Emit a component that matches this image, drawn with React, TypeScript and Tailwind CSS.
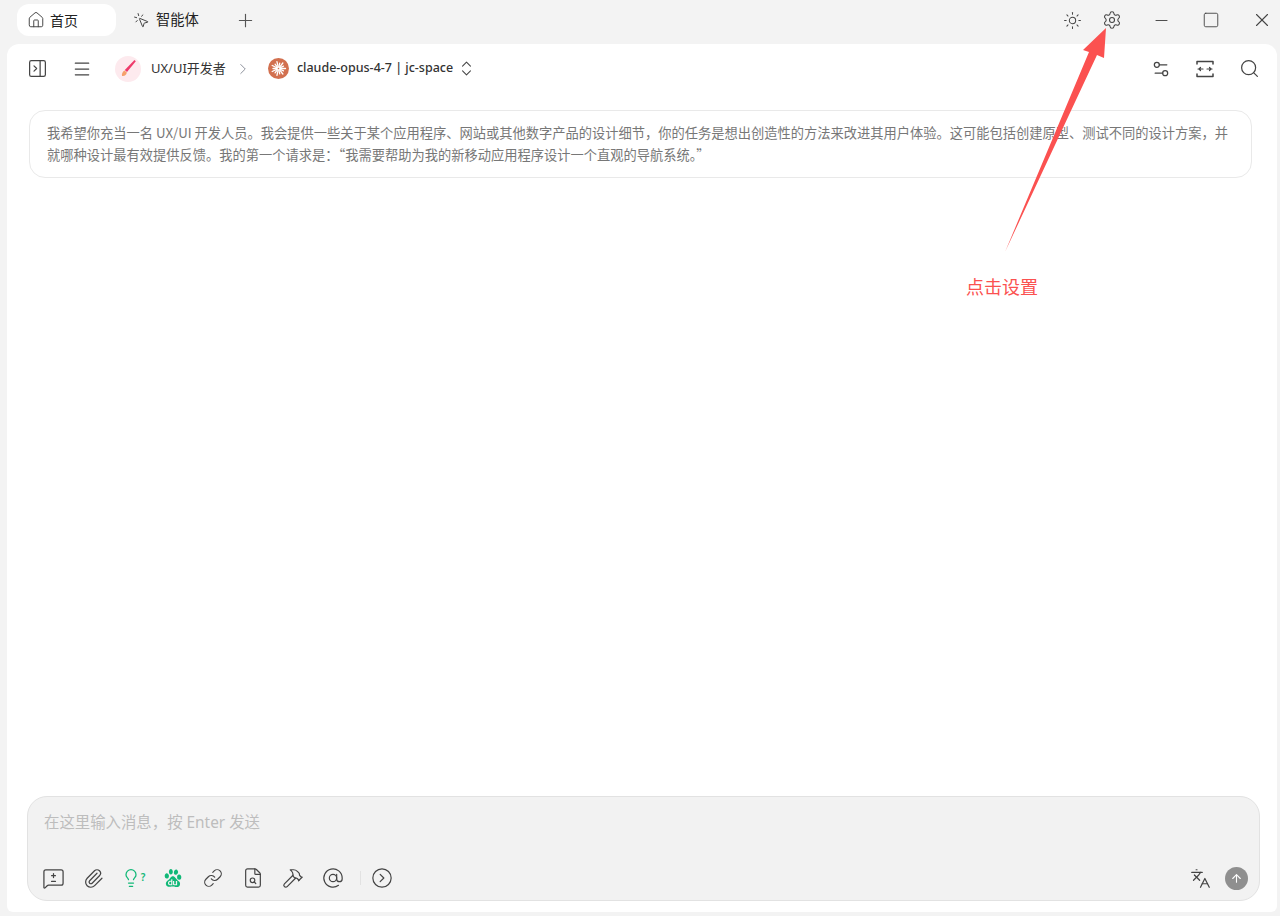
import React from "react";
import {
  House, MousePointerClick, Plus, Sun, Settings, Minus, Square, X, PanelRightClose, Menu,
  ChevronRight, ChevronsUpDown, Settings2, Search, MessageSquareDiff, Paperclip, Lightbulb,
  Link, FileSearch, Hammer, AtSign, CircleChevronRight, Languages, ArrowUp,
} from "lucide-react";
import { SiBaidu } from "react-icons/si";

const font = "font-['Noto_Sans','Noto_Sans_CJK_SC',sans-serif]";

function Slot({ children, w = "w-10" }: { children: React.ReactNode; w?: string }) {
  return <div className={`${w} h-6 flex items-center justify-center text-[#444]`}>{children}</div>;
}

function FitIcon() {
  return (
    <svg width="20" height="20" viewBox="0 0 20 20" fill="none" stroke="#444" strokeWidth="1.5" strokeLinecap="round" strokeLinejoin="round">
      <path d="M2 5V2.500h16V5M2 15v2.500h16V15" />
      <path d="M3 10H8M5.500 8.500 4 10 5.500 11.500M12 10h5M14.500 8.500l1.500 1.500L14.500 11.500" strokeWidth="1.200" />
    </svg>
  );
}

function Sunburst() {
  const rays = Array.from({ length: 14 }, (_, i) => (i * Math.PI * 2) / 14);
  return (
    <svg width="21" height="21" viewBox="0 0 21 21" className="shrink-0">
      <circle cx="10.500" cy="10.500" r="10.500" fill="#d2704f" />
      {rays.map((a, i) => (
        <line
          key={i}
          x1={10.5 + Math.cos(a) * 1.5}
          y1={10.5 + Math.sin(a) * 1.5}
          x2={10.5 + Math.cos(a) * (i % 2 ? 5.5 : 7)}
          y2={10.5 + Math.sin(a) * (i % 2 ? 5.5 : 7)}
          stroke="#fff"
          strokeWidth="1.300"
          strokeLinecap="round"
        />
      ))}
    </svg>
  );
}

function BrushAvatar() {
  return (
    <div className="w-[26px] h-[26px] rounded-full bg-[#fdeaee] flex items-center justify-center shrink-0">
      <svg width="18" height="20" viewBox="0 0 18 20">
        <path d="M15.500 1 16.800 2.200 8 13 5.800 11Z" fill="#ee3a6a" />
        <path d="M5.500 11.500 7.800 13.500C7.500 16 5.500 17.500 3 17 2.500 15 3.500 12.500 5.500 11.500Z" fill="#f5a06a" />
      </svg>
    </div>
  );
}

export default function App() {
  return (
    <div className={`relative w-[1280px] h-[916px] overflow-hidden bg-[#f3f3f3] flex flex-col ${font}`}>
      {/* Title bar */}
      <div className="h-[44px] shrink-0 flex items-start pt-1 pl-[17px]">
        <div className="w-[99px] h-8 bg-white rounded-xl flex items-center pl-[9.500px] gap-[5.500px] text-[14px] text-[#222]">
          <House size={18} strokeWidth={1.300} className="text-[#444]" />
          <span>首页</span>
        </div>
        <div className="h-8 flex items-center ml-[16.500px] gap-[6.500px] text-[14.300px] text-[#222]">
          <MousePointerClick size={17} strokeWidth={1.400} className="text-[#444]" />
          <span>智能体</span>
        </div>
        <div className="h-8 flex items-center ml-[36px] text-[#555]">
          <Plus size={21} strokeWidth={1.300} />
        </div>
        <div className="ml-auto h-8 flex items-center">
          <Slot><Sun size={19} strokeWidth={1.300} /></Slot>
          <Slot><Settings size={20} strokeWidth={1.300} /></Slot>
          <div className="w-[4px]" />
          <Slot w="w-[50px]"><Minus size={19} strokeWidth={1.200} /></Slot>
          <Slot w="w-[50px]"><Square size={18} strokeWidth={1.200} /></Slot>
          <div className="w-2" />
          <Slot w="w-[36px]"><X size={22} strokeWidth={1.200} /></Slot>
        </div>
      </div>

      {/* Main panel */}
      <div className="flex-1 ml-[7px] mr-[3px] mb-[4px] bg-white rounded-t-xl rounded-b-md flex flex-col min-h-0">
        <div className="h-[49px] shrink-0 flex items-center pl-[20px] pr-[17px]">
          <PanelRightClose size={21} strokeWidth={1.400} className="text-[#444]" />
          <Menu size={20} strokeWidth={1.500} className="text-[#444] ml-[24px]" />
          <div className="ml-[23px]"><BrushAvatar /></div>
          <span className="ml-[10px] text-[13px] text-[#333]">UX/UI开发者</span>
          <ChevronRight size={18} strokeWidth={1.300} className="text-[#8a8f99] ml-2" />
          <div className="ml-[16px]"><Sunburst /></div>
          <span className="ml-2 text-[12.500px] font-medium text-[#333]">claude-opus-4-7 | jc-space</span>
          <ChevronsUpDown size={19} strokeWidth={1.300} className="text-[#444] ml-[4px]" />
          <div className="ml-auto flex items-center gap-[24px]">
            <Settings2 size={20} strokeWidth={1.500} className="text-[#444]" />
            <FitIcon />
            <Search size={21} strokeWidth={1.400} className="text-[#444]" />
          </div>
        </div>

        <div className="flex-1 min-h-0 pt-[17px] pl-[22px] pr-[25px]">
          <div className="h-[68px] rounded-2xl border border-[#e9e9e9] px-[17px] pt-[11px] font-['Noto_Sans_CJK_SC',sans-serif] text-[13.250px] leading-[22px] text-[#777]">
            我希望你充当一名 UX/UI 开发人员。我会提供一些关于某个应用程序、网站或其他数字产品的设计细节，你的任务是想出创造性的方法来改进其用户体验。这可能包括创建原型、测试不同的设计方案，并就哪种设计最有效提供反馈。我的第一个请求是：“我需要帮助为我的新移动应用程序设计一个直观的导航系统。”
          </div>
        </div>

        <div className="ml-[20px] mr-[17px] mb-[11px] h-[105px] shrink-0 rounded-[20px] border border-[#e2e2e2] bg-[#f2f2f2] flex flex-col pl-[16px] pr-[11px]">
          <div className="pt-[14px] text-[15.400px] leading-[24px] text-[#bdbdbd]">在这里输入消息，按 Enter 发送</div>
          <div className="mt-auto mb-[10px] flex items-center h-[24px] text-[#444]">
            <div className="w-10 -ml-[11px] flex justify-center"><MessageSquareDiff size={23} strokeWidth={1.300} /></div>
            <div className="w-10 flex justify-center"><Paperclip size={21} strokeWidth={1.400} /></div>
            <div className="w-10 flex justify-center items-start text-[#10b877]">
              <Lightbulb size={20} strokeWidth={1.500} />
              <span className="text-[10px] font-semibold leading-[14px] mt-[2px]">?</span>
            </div>
            <div className="w-10 flex justify-center"><SiBaidu size={18} color="#10b877" /></div>
            <div className="w-10 flex justify-center"><Link size={20} strokeWidth={1.400} /></div>
            <div className="w-10 flex justify-center"><FileSearch size={22} strokeWidth={1.300} /></div>
            <div className="w-10 flex justify-center"><Hammer size={22} strokeWidth={1.300} /></div>
            <div className="w-10 flex justify-center"><AtSign size={22} strokeWidth={1.300} /></div>
            <div className="w-px h-[14px] bg-[#e2e2e2] ml-[7px]" />
            <div className="ml-[10px]"><CircleChevronRight size={22} strokeWidth={1.300} /></div>
            <div className="ml-auto flex items-center gap-[14px]">
              <Languages size={21} strokeWidth={1.400} />
              <div className="w-[23px] h-[23px] rounded-full bg-[#8f8f8f] flex items-center justify-center text-white">
                <ArrowUp size={13} strokeWidth={2} />
              </div>
            </div>
          </div>
        </div>
      </div>

      {/* Annotation */}
      <svg className="absolute inset-0 pointer-events-none" width="1280" height="916" viewBox="0 0 1280 916">
        <polygon points="1106,28 1104,58 1097,55 1005,252 1089,52 1083,50" fill="#fb5150" />
      </svg>
      <div className="absolute left-[966px] top-[275px] text-[18px] leading-[24px] text-[#fb5150]">点击设置</div>
    </div>
  );
}
